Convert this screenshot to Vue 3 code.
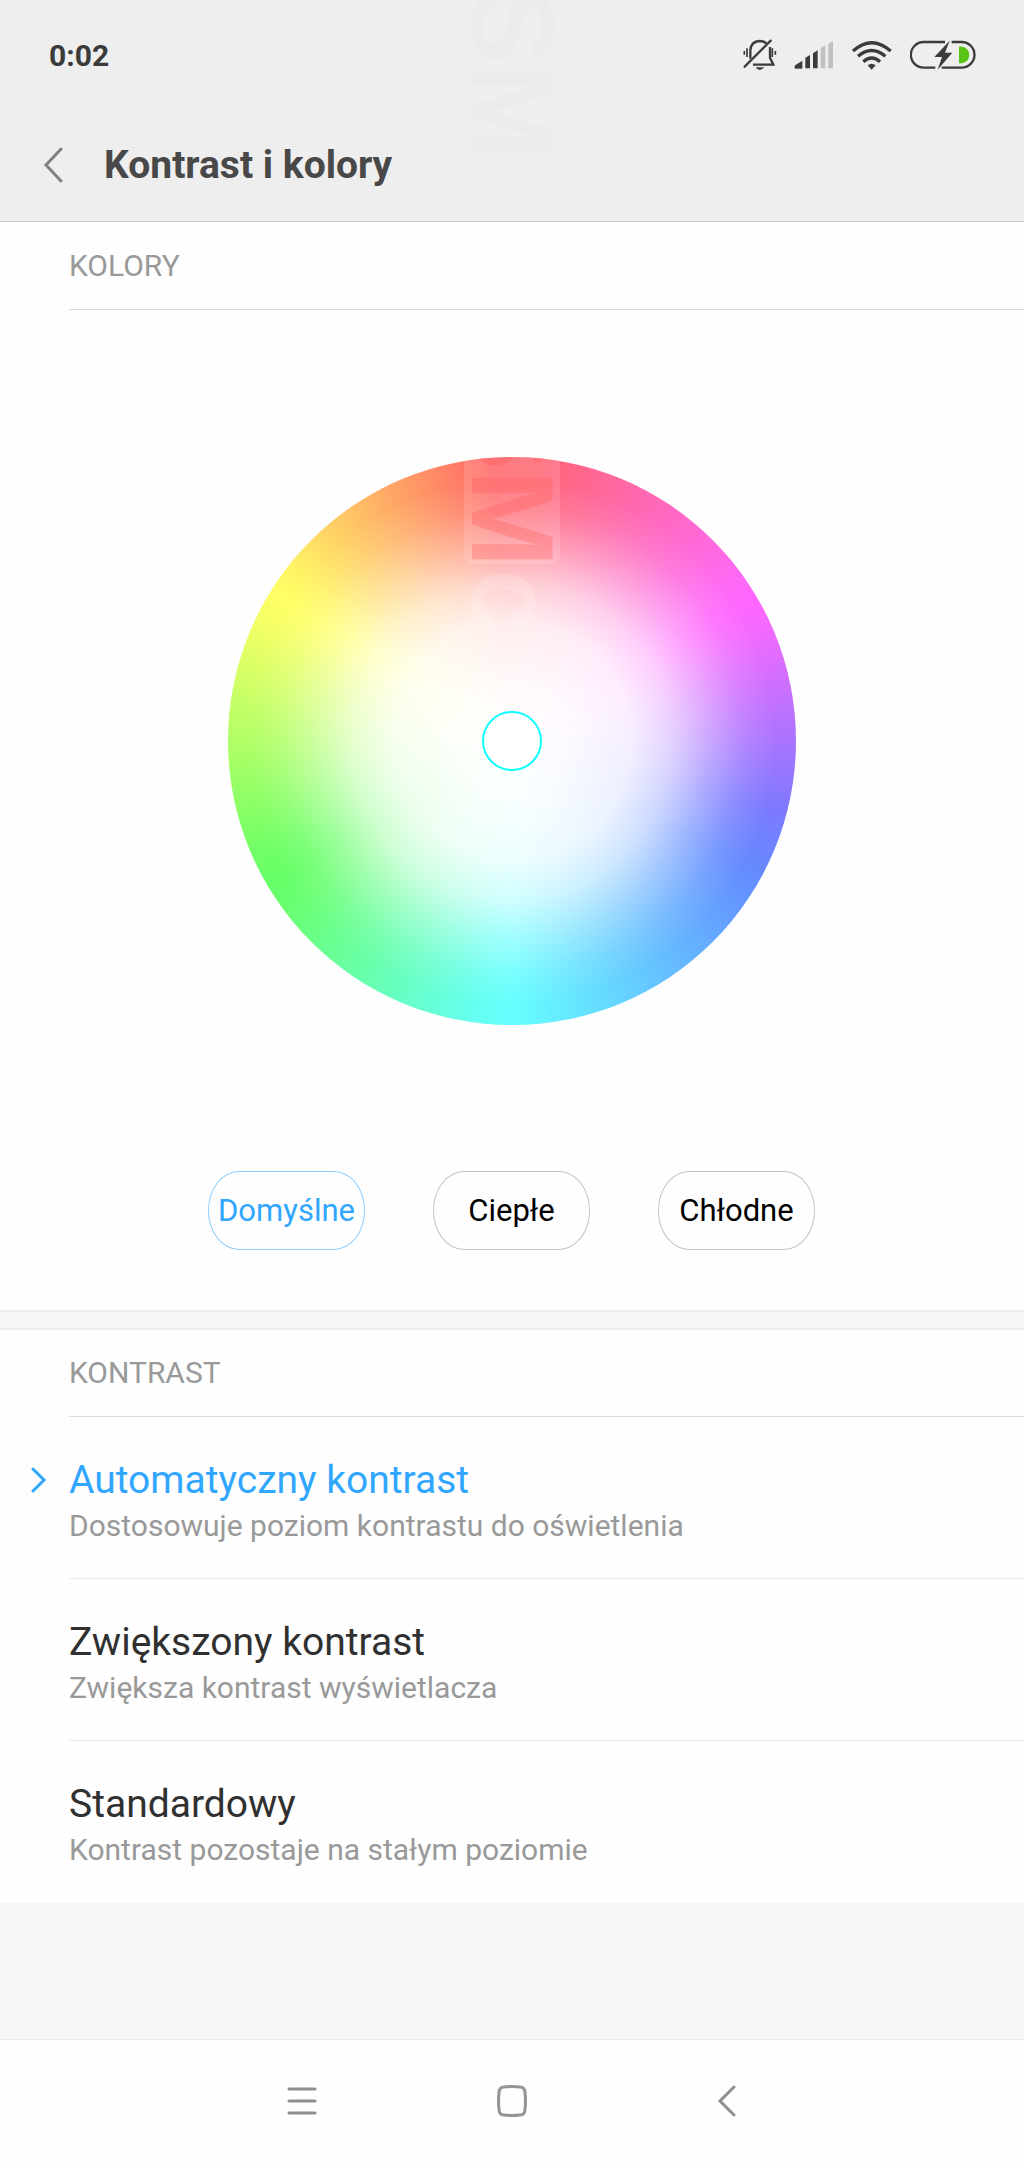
<script setup>
import { ref } from 'vue'

const presets = ['Domyślne', 'Ciepłe', 'Chłodne']
const preset = ref('Domyślne')

const modes = [
  { id: 'auto', title: 'Automatyczny kontrast', note: 'Dostosowuje poziom kontrastu do oświetlenia' },
  { id: 'high', title: 'Zwiększony kontrast', note: 'Zwiększa kontrast wyświetlacza' },
  { id: 'standard', title: 'Standardowy', note: 'Kontrast pozostaje na stałym poziomie' },
]
const mode = ref('auto')
</script>

<template>
  <div class="screen">
    <header class="top">
      <div class="mark mark-top" aria-hidden="true"><span>SM</span></div>
      <div class="status">
        <span class="time">0:02</span>
        <div class="status-icons">
          <svg width="34" height="32" viewBox="71 54 102 96" fill="none" stroke="#3b3b3b" stroke-width="7">
            <path d="M93 113V88Q95 61 121 60Q133 60 141 67M152 78V110L162 131H101" />
            <path d="M76 137L154 59" stroke-linecap="round" />
            <path d="M75 90V101M83 82V108M159 82V108M168 90V101" stroke-width="5" />
            <path d="M109 139H134Q128 147 121 147Q114 147 109 139Z" fill="#3b3b3b" stroke="none" />
          </svg>
          <svg width="40" height="30" viewBox="224 58 120 90">
            <g fill="#3b3b3b">
              <path d="M227 143V135L248 122V143Z" stroke="#3b3b3b" stroke-width="2" stroke-linejoin="round" />
              <path d="M258 143V111L272 103V143Z" />
              <path d="M281 143V98L295 89V143Z" />
            </g>
            <g fill="#c0c0c0">
              <path d="M304 143V83L318 74V143Z" />
              <path d="M327 143V70L341 61V143Z" />
            </g>
          </svg>
          <svg width="42" height="32" viewBox="395 54 126 96" fill="none" stroke="#3b3b3b" stroke-width="10">
            <path d="M401 90Q457 40 514 90M416 106Q457 71 498 106M432 122Q457 100 482 122" />
            <path d="M445 133Q457 124 469 133L457 146Z" fill="#3b3b3b" stroke="none" />
          </svg>
          <svg width="66" height="34" viewBox="572 54 198 102">
            <path d="M677 66H613A38.500 38.500 0 0 0 613 143H648M697 66H727A38.500 38.500 0 0 1 727 143H667" fill="none" stroke="#3b3b3b" stroke-width="7" />
            <path d="M691 62L645 111H668L655 149L699 98H677Z" fill="#3b3b3b" />
            <path d="M719 80C760 76 760 134 719 130Z" fill="#58c516" />
          </svg>
        </div>
      </div>
      <div class="title-bar">
        <button class="back" type="button" aria-label="Wstecz">
          <svg width="20" height="36" viewBox="0 0 20 36" fill="none" stroke="#808080" stroke-width="3" stroke-linecap="round">
            <path d="M18 2L3 18L18 34" />
          </svg>
        </button>
        <h1>Kontrast i kolory</h1>
      </div>
    </header>

    <main>
      <section class="color-section">
        <h2>KOLORY</h2>
        <div class="colors">
          <div class="wheel">
            <div class="mark mark-wheel" aria-hidden="true"><span>SM</span></div>
            <div class="mark-c" aria-hidden="true">c</div>
            <button class="handle" type="button" aria-label="Kolor"></button>
          </div>
          <div class="presets">
            <button
              v-for="name in presets"
              :key="name"
              type="button"
              class="preset"
              :class="{ active: preset === name }"
              @click="preset = name"
            >{{ name }}</button>
          </div>
        </div>
      </section>

      <div class="band"></div>

      <section>
        <h2>KONTRAST</h2>
        <div class="modes">
          <label v-for="m in modes" :key="m.id" class="mode" :class="{ active: mode === m.id }">
            <input v-model="mode" type="radio" name="contrast" :value="m.id" />
            <svg v-if="mode === m.id" class="tick" width="16" height="26" viewBox="0 0 16 26" fill="none" stroke="#31a6ff" stroke-width="3" stroke-linecap="round">
              <path d="M2 2L13 13L2 24" />
            </svg>
            <span class="mode-text">
              <span class="mode-title">{{ m.title }}</span>
              <span class="mode-note">{{ m.note }}</span>
            </span>
          </label>
        </div>
      </section>
    </main>

    <nav>
      <button type="button" aria-label="Menu">
        <svg width="32" height="32" viewBox="0 0 32 32" fill="none" stroke="#8e8e8e" stroke-width="3" stroke-linecap="round">
          <path d="M3 4H29M3 16H29M3 28H29" />
        </svg>
      </button>
      <button type="button" aria-label="Ekran główny">
        <svg width="32" height="32" viewBox="0 0 32 32" fill="none" stroke="#949494" stroke-width="3">
          <path d="M8 2Q16 1 24 2Q29 2 29 8Q30 16 29 24Q29 30 24 30Q16 31 8 30Q3 30 3 24Q2 16 3 8Q3 2 8 2Z" />
        </svg>
      </button>
      <button type="button" aria-label="Wstecz">
        <svg width="32" height="32" viewBox="0 0 32 32" fill="none" stroke="#8e8e8e" stroke-width="3" stroke-linecap="round">
          <path d="M28 2L14 16L28 30" />
        </svg>
      </button>
    </nav>
  </div>
</template>

<style>
body {
  margin: 0;
  background: #f6f6f6;
}
</style>

<style scoped>
.screen {
  display: flex;
  flex-direction: column;
  min-height: 100vh;
  background: #f6f6f6;
  font-family: Roboto, "Noto Sans", sans-serif;
}

button {
  padding: 0;
  border: 0;
  background: none;
  font: inherit;
  cursor: pointer;
}

svg {
  display: block;
}

.top {
  position: relative;
  border-bottom: 1px solid #c8c8c8;
  background: #eee;
}

.status {
  position: relative;
  display: flex;
  align-items: center;
  justify-content: space-between;
  height: 110px;
  padding: 0 48px 0 49px;
}

.time {
  color: #3b3b3b;
  font-size: 30px;
  font-weight: 700;
}

.status-icons {
  display: flex;
  align-items: center;
  gap: 17px;
}

.title-bar {
  position: relative;
  display: flex;
  align-items: center;
  height: 109px;
  padding: 0 0 2px 43px;
}

.back {
  width: 61px;
}

h1 {
  margin: 0;
  color: #484848;
  font-size: 39px;
  font-weight: 700;
  line-height: 44px;
}

main {
  background: #fefefe;
}

.color-section {
  padding-top: 1px;
}

h2 {
  margin: 0 0 0 69px;
  border-bottom: 1px solid #dcdcdc;
  color: #999;
  font-size: 30px;
  font-weight: 400;
  line-height: 86px;
}

.colors {
  display: flex;
  flex-direction: column;
  align-items: center;
  gap: 146px;
  padding: 147px 0 60px;
}

.wheel {
  position: relative;
  overflow: hidden;
  width: 568px;
  height: 568px;
  border-radius: 50%;
  background:
    radial-gradient(closest-side, #fff 0%, rgba(255, 255, 255, 0.96) 20%, rgba(255, 255, 255, 0.88) 42%, rgba(255, 255, 255, 0.68) 56%, rgba(255, 255, 255, 0.36) 70%, rgba(255, 255, 255, 0.12) 82%, rgba(255, 255, 255, 0) 93%),
    conic-gradient(#ff6670 4deg, #ff6af5 54deg, #ff66ff 60deg, #f26aff 66deg, #7c7aff 105deg, #648aff 118deg, #66f2ff 173deg, #66ffff 180deg, #66fff2 187deg, #6aff72 233deg, #66ff66 240deg, #72ff66 247deg, #f6ff66 296deg, #ffff66 302deg, #fff466 308deg, #ff8c66 343deg, #ff6668 356deg, #ff6670);
}

.handle {
  position: absolute;
  inset: 0;
  width: 60px;
  height: 60px;
  margin: auto;
  border: 2px solid #1ff;
  border-radius: 50%;
  background: #fff;
}

.mark {
  position: absolute;
  top: 0;
  left: calc(50% - 48px);
  display: flex;
  align-items: center;
  justify-content: flex-end;
  overflow: hidden;
  width: 96px;
  border-radius: 0 0 8px 8px;
  font-family: "Liberation Sans", sans-serif;
  font-size: 116px;
  font-weight: 700;
  line-height: 96px;
  writing-mode: vertical-rl;
}

.mark span {
  margin-bottom: -3px;
}

.mark-top {
  height: 157px;
  background: #efefef;
  color: #ececec;
}

.mark-wheel {
  height: 107px;
  background: rgba(255, 255, 255, 0.14);
  color: rgba(255, 90, 90, 0.32);
}

.mark-c {
  position: absolute;
  top: 112px;
  left: calc(50% - 48px);
  color: rgba(255, 255, 255, 0.16);
  font-family: "Liberation Sans", sans-serif;
  font-size: 116px;
  font-weight: 700;
  line-height: 96px;
  writing-mode: vertical-rl;
}

.presets {
  display: flex;
  gap: 68px;
  padding-right: 1px;
}

.preset {
  box-sizing: border-box;
  width: 157px;
  height: 79px;
  border: 1px solid #c4c4c4;
  border-radius: 31px / 39px;
  color: #000;
  font-size: 31px;
}

.preset.active {
  border-color: #8fcfff;
  color: #31a6ff;
}

.band {
  height: 16px;
  border: solid #efefef;
  border-width: 2px 0;
  background: #f6f6f6;
}

.mode {
  position: relative;
  display: flex;
  height: 162px;
  padding-left: 69px;
  cursor: pointer;
}

.mode input {
  position: absolute;
  opacity: 0;
}

.tick {
  position: absolute;
  top: 50px;
  left: 31px;
}

.mode-text {
  display: flex;
  flex: 1;
  flex-direction: column;
  gap: 1px;
  justify-content: center;
  box-sizing: border-box;
  padding-top: 7px;
  border-bottom: 1px solid #eaeaea;
}

.mode:last-child .mode-text {
  border-bottom-color: transparent;
}

.mode-title {
  color: #303030;
  font-size: 39px;
  line-height: 48px;
}

.mode.active .mode-title {
  color: #31a6ff;
}

.mode-note {
  color: #999;
  font-size: 30px;
  line-height: 42px;
}

nav {
  display: flex;
  justify-content: center;
  gap: 178px;
  margin-top: auto;
  border-top: 1px solid #ebebeb;
  background: #fefefe;
  padding: 45px 0;
}
</style>
